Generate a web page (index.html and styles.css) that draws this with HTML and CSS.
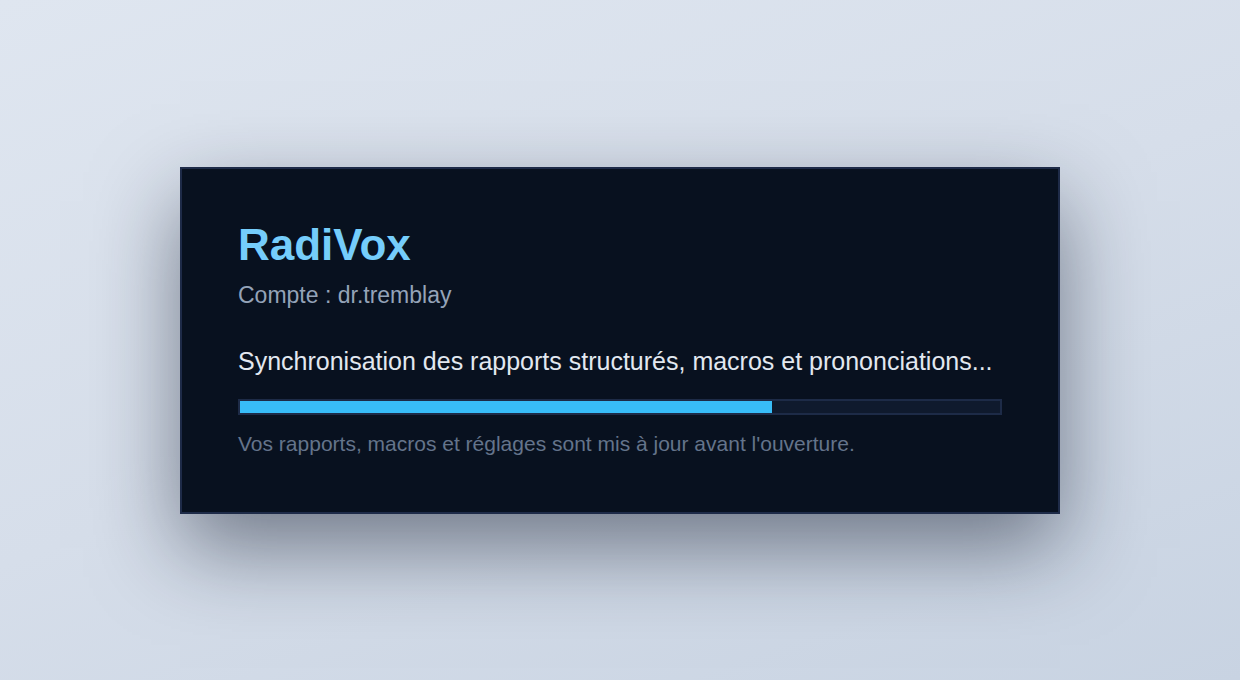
FILE: index.html
```html
<!DOCTYPE html>
<html lang="fr">
<head>
<meta charset="utf-8">
<title>RadiVox</title>
<link rel="stylesheet" href="styles.css">
</head>
<body>
<main class="screen">
  <section class="card">
    <h1 class="title">RadiVox</h1>
    <p class="account">Compte : dr.tremblay</p>
    <p class="status">Synchronisation des rapports structurés, macros et prononciations...</p>
    <div class="progress"><div class="progress-fill" style="width: 70%"></div></div>
    <p class="note">Vos rapports, macros et réglages sont mis à jour avant l'ouverture.</p>
  </section>
</main>
</body>
</html>
```

FILE: styles.css
```css
html, body {
  margin: 0;
  padding: 0;
  height: 100%;
}
body {
  font-family: "Liberation Sans", Arial, sans-serif;
  background: linear-gradient(160deg, #dfe6f0 0%, #d6deea 50%, #c8d3e2 100%);
}
.screen {
  height: 100vh;
  display: flex;
  align-items: center;
  justify-content: center;
}
.card {
  width: 880px;
  box-sizing: border-box;
  padding: 56px;
  background: #08111f;
  border: 2px solid #1e2b48;
  box-shadow: 0 34px 80px rgba(15, 23, 42, 0.5);
}
.title {
  margin: 0;
  font-size: 44px;
  line-height: 40px;
  font-weight: 700;
  color: #75cdfb;
}
.account {
  margin: 16px 0 0;
  font-size: 23px;
  line-height: 28px;
  color: #94a3b8;
}
.status {
  margin: 37px 0 0;
  font-size: 25px;
  line-height: 30px;
  color: #e2e8f0;
}
.progress {
  margin-top: 23px;
  height: 12px;
  border: 2px solid #1d2b47;
  background: #0f1a2d;
}
.progress-fill {
  height: 100%;
  background: #38bdf8;
}
.note {
  margin: 17px 0 0;
  font-size: 21px;
  line-height: 24px;
  color: #64748b;
}
```
